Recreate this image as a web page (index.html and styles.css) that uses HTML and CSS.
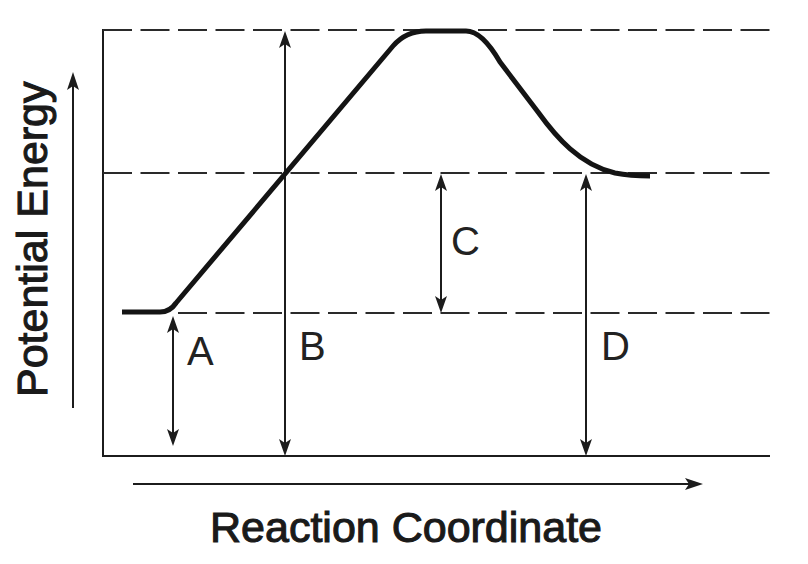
FILE: index.html
```
<!DOCTYPE html>
<html lang="en">
<head>
<meta charset="utf-8">
<title>Potential Energy Diagram</title>
<link rel="stylesheet" href="styles.css">
</head>
<body>
<main class="page">
  <svg class="fig" width="808" height="564" viewBox="0 0 808 564" xmlns="http://www.w3.org/2000/svg">
    <!-- axes arrows -->
    <line class="thin" x1="73" y1="408" x2="73" y2="82"/>
    <polygon class="head" points="73,72 67,90 73,86 79,90"/>
    <line class="thin" x1="133" y1="484" x2="692" y2="484"/>
    <polygon class="head" points="703,484 685,478 689,484 685,490"/>

    <!-- frame -->
    <line class="thin" x1="103" y1="29" x2="103" y2="457"/>
    <line class="thin" x1="102" y1="456" x2="770" y2="456"/>

    <!-- dashed levels -->
    <line class="dash" x1="103" y1="30" x2="770" y2="30"/>
    <line class="dash" x1="103" y1="173" x2="770" y2="173"/>
    <line class="dash" x1="178" y1="313" x2="770" y2="313"/>

    <!-- A -->
    <line class="thin" x1="173" y1="325" x2="173" y2="437"/>
    <polygon class="head" points="173,316 167,333 173,329 179,333"/>
    <polygon class="head" points="173,446 167,429 173,433 179,429"/>
    <!-- B -->
    <line class="thin" x1="285" y1="40" x2="285" y2="448"/>
    <polygon class="head" points="285,31 279,48 285,44 291,48"/>
    <polygon class="head" points="285,456 279,439 285,443 291,439"/>
    <!-- C -->
    <line class="thin" x1="441" y1="182" x2="441" y2="304"/>
    <polygon class="head" points="441,174 435,191 441,187 447,191"/>
    <polygon class="head" points="441,313 435,296 441,300 447,296"/>
    <!-- D -->
    <line class="thin" x1="586" y1="182" x2="586" y2="448"/>
    <polygon class="head" points="586,174 580,191 586,187 592,191"/>
    <polygon class="head" points="586,456 580,439 586,443 592,439"/>

    <!-- reaction curve -->
    <path class="curve" d="M122 312 H160 Q170 312 176 303 L393 46 Q406 31 426 31 H466 Q482 31 500 62 L538 112 C556 137 580 165 615 173 Q630 176 650 176"/>

    <!-- letters -->
    <text class="label" x="187" y="365">A</text>
    <text class="label" x="299" y="360">B</text>
    <text class="label" x="451" y="255">C</text>
    <text class="label" x="601" y="360">D</text>

    <!-- axis titles -->
    <text class="axis-title" transform="translate(47,397) rotate(-90)">Potential Energy</text>
    <text class="axis-title" x="210" y="542">Reaction Coordinate</text>
  </svg>
</main>
</body>
</html>
```
FILE: styles.css
```
html, body {
  margin: 0;
  padding: 0;
  background: #ffffff;
}

.page {
  width: 808px;
  height: 564px;
  overflow: hidden;
}

.fig {
  display: block;
}

.thin {
  stroke: #1c1c1c;
  stroke-width: 2;
  fill: none;
}

.dash {
  stroke: #2a2a2a;
  stroke-width: 2;
  stroke-dasharray: 29 8.5;
  fill: none;
}

.head {
  fill: #1c1c1c;
  stroke: none;
}

.curve {
  stroke: #141414;
  stroke-width: 5;
  fill: none;
  stroke-linejoin: round;
}

.label {
  font-family: "Liberation Sans", Arial, sans-serif;
  font-size: 40px;
  fill: #222222;
}

.axis-title {
  font-family: "Liberation Sans", Arial, sans-serif;
  font-size: 43px;
  font-weight: normal;
  fill: #1a1a1a;
  stroke: #1a1a1a;
  stroke-width: 1.1px;
}
```
